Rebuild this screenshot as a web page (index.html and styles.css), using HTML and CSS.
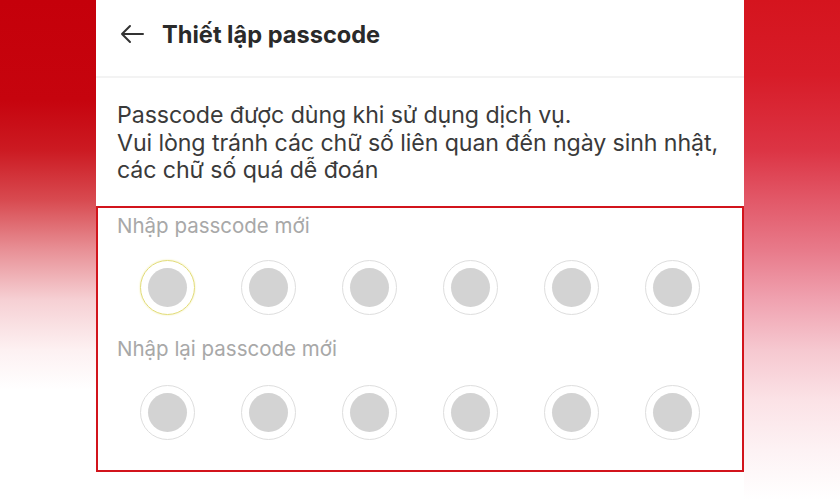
FILE: index.html
```html
<!DOCTYPE html>
<html lang="vi">
<head>
<meta charset="utf-8">
<link rel="stylesheet" href="styles.css">
</head>
<body>
<div class="page">
  <div class="side side-left"></div>
  <main class="panel">
    <header class="header">
      <svg class="back" width="26" height="20" viewBox="0 0 26 20"><path d="M24 10H3M11 2L3 10l8 8" fill="none" stroke="#333" stroke-width="2" stroke-linecap="round" stroke-linejoin="round"/></svg>
      <h1 class="title">Thiết lập passcode</h1>
    </header>
    <p class="desc">Passcode được dùng khi sử dụng dịch vụ.<br>Vui lòng tránh các chữ số liên quan đến ngày sinh nhật,<br>các chữ số quá dễ đoán</p>
    <section class="box">
      <div class="label">Nhập passcode mới</div>
      <div class="dots">
        <span class="dot active"></span><span class="dot"></span><span class="dot"></span><span class="dot"></span><span class="dot"></span><span class="dot"></span>
      </div>
      <div class="label label2">Nhập lại passcode mới</div>
      <div class="dots">
        <span class="dot"></span><span class="dot"></span><span class="dot"></span><span class="dot"></span><span class="dot"></span><span class="dot"></span>
      </div>
    </section>
  </main>
  <div class="side side-right"></div>
</div>
</body>
</html>
```
FILE: styles.css
```css
html, body { margin: 0; padding: 0; background: #fff; }
body { width: 840px; height: 500px; overflow: hidden; font-family: Inter, "Liberation Sans", Arial, sans-serif; }
.page { display: flex; height: 500px; }
.side { width: 96px; height: 500px; }
.side-left { background: linear-gradient(to bottom, #c5000a 0%, #c6040e 20%, #cc1a22 30%, #d84a50 40%, #e89096 50%, #f6d0d4 60%, #fdf1f2 70%, #fff 78%, #fff 100%); }
.side-right { background: linear-gradient(to bottom, #d5141e 0%, #d71c28 15%, #dc3444 30%, #e25868 40%, #e87a8a 50%, #f0a2b0 60%, #f6c8d0 70%, #fbe2e6 80%, #fdf2f4 90%, #fff 100%); }
.panel { width: 648px; background: #fff; display: flex; flex-direction: column; }
.header { height: 78px; display: flex; align-items: center; padding-left: 23px; gap: 17px; border-bottom: 2px solid #f3f3f3; box-sizing: border-box; padding-bottom: 8px; }
.back { display: block; }
.title { margin: 0; font-size: 23.6px; font-weight: 700; color: #2a2a2a; }
.desc { margin: 0; padding: 24px 0 0 21px; height: 128px; box-sizing: border-box; font-size: 23.2px; line-height: 27.5px; color: #3a3a3a; letter-spacing: -0.1px; }
.box { border: 2px solid #d2141c; height: 266px; box-sizing: border-box; padding-top: 5px; }
.label { font-size: 20.5px; line-height: 25px; color: #a8a8a8; padding-left: 19px; }
.label2 { margin-top: 21px; }
.dots { display: flex; justify-content: space-between; padding: 0 42px; margin-top: 22px; }
.label2 + .dots { margin-top: 24px; }
.dot { width: 55px; height: 55px; border-radius: 50%; border: 1.5px solid #dedede; box-sizing: border-box; display: flex; align-items: center; justify-content: center; }
.dot::after { content: ""; width: 39px; height: 39px; border-radius: 50%; background: #d3d3d3; }
.dot.active { border-color: #e2dc78; box-shadow: 0 0 2px #efe9a0; }
```
